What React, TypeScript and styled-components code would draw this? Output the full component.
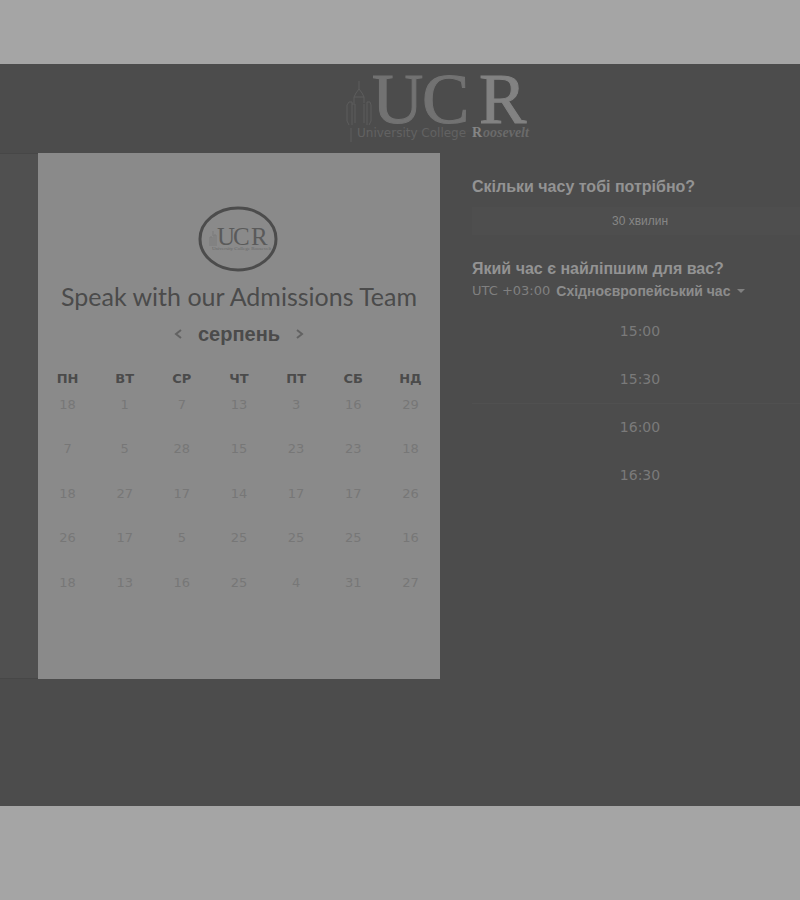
import React from 'react';
import styled, { createGlobalStyle } from 'styled-components';

const GlobalStyle = createGlobalStyle`
  *, *::before, *::after { box-sizing: border-box; }
  body { margin: 0; background: #a5a5a5; overflow-x: hidden; }
  button, select { font: inherit; color: inherit; border: 0; padding: 0; background: none; cursor: pointer; }
`;

const sans = `"Liberation Sans", Arial, sans-serif`;
const humanist = `Lato, "Open Sans", sans-serif`;
const wide = `"DejaVu Sans", Verdana, sans-serif`;

const Page = styled.div`
  min-height: 100vh;
  padding: 64px 0 94px;
  display: flex;
  background: #a5a5a5;
  font-family: ${sans};
`;

const Scheduler = styled.div`
  flex: 1;
  min-width: 0;
  background: #4c4c4c;
`;

const Header = styled.header`
  padding-left: 82px;
  display: flex;
  justify-content: center;
`;

const Columns = styled.main`
  display: grid;
  grid-template-columns: 38px minmax(0, 402fr) minmax(0, 360fr);
`;

const Gutter = styled.div`
  background: #505050;
  border-top: 1px solid #474747;
  border-bottom: 1px solid #474747;
`;

const Card = styled.section`
  min-height: 526px;
  padding: 53px 1px 24px;
  display: flex;
  flex-direction: column;
  align-items: center;
  background: #8a8a8a;
  color: #4b4b4b;
`;

const Title = styled.h1`
  margin: 8px 0 0;
  font: 400 25px/32px ${humanist};
  white-space: nowrap;
`;

const MonthBar = styled.div`
  margin-top: 6px;
  display: flex;
  align-items: center;
  gap: 12px;
`;

const Month = styled.h2`
  margin: 0;
  font: 700 20px/32px ${sans};
`;

const Arrow = styled.button`
  width: 16px;
  height: 24px;
  display: grid;
  place-items: center;
  color: #626262;
`;

const Calendar = styled.table`
  width: 100%;
  height: 246px;
  margin-top: 17px;
  border-collapse: collapse;
  table-layout: fixed;
  text-align: center;
`;

const Weekday = styled.th`
  height: 24px;
  padding: 0;
  font: 700 13px/24px ${wide};
`;

const DayCell = styled.td`
  padding: 0;
  vertical-align: top;
`;

const Day = styled.button`
  width: 40px;
  height: 28px;
  font: 400 13px/28px ${wide};
  color: #777777;
`;

const Side = styled.section`
  padding: 24px 0 0 32px;
  margin-right: -8px;
  color: #939393;
`;

const Question = styled.h2`
  margin: 0;
  font: 700 16px/20px ${sans};
`;

const Duration = styled.button`
  width: 100%;
  height: 28px;
  margin: 10px 0 24px;
  display: block;
  background: #4e4e4e;
  color: #868686;
  font: 400 12px/28px ${sans};
`;

const Zone = styled.div`
  height: 20px;
  margin-top: 2px;
  display: flex;
  align-items: center;
  gap: 6px;
  font: 400 13px/20px ${wide};
  color: #808080;
`;

const ZoneSelect = styled.select`
  appearance: none;
  font: 700 14px/20px ${sans};
  color: #8c8c8c;
`;

const Slots = styled.ul`
  margin: 7px 0 0;
  padding: 0;
  list-style: none;
`;

const SlotItem = styled.li`
  border-bottom: 1px solid ${(p: { $ruled?: boolean }) => (p.$ruled ? '#505050' : 'transparent')};
`;

const Slot = styled.button`
  width: 100%;
  height: 47px;
  display: block;
  font: 400 14px/47px ${wide};
  color: #7a7a7a;
`;

const LogoArt = styled.svg`
  display: block;
  flex: none;
  overflow: visible;
`;

function HeaderLogo() {
  return (
    <LogoArt width="190" height="89" viewBox="0 -8 190 89" role="img" aria-label="University College Roosevelt">
      <g fill="none" stroke="#5c5c5c" strokeWidth="1">
        <path d="M13 9v8M8 25l2-4 3-4 3 4 2 4M8 25h10M8 25v6M18 25v6M3 30l-2 3v16l2 4M3 30h3v23M6 32h3v19M18 32v19M21 53V30h3l1 3v16l-2 4M5 56v14" />
        <path d="M20 59h164" stroke="#515151" />
      </g>
      <g fontFamily="Liberation Serif" fontSize="71" strokeWidth="1">
        <text x="26" y="51" fill="#727272" stroke="#727272">U</text>
        <text x="76" y="51" fill="#727272" stroke="#727272">C</text>
        <text x="133" y="51" fill="#828282" stroke="#828282">R</text>
      </g>
      <text x="11" y="65" fill="#626262" fontFamily="DejaVu Sans" fontSize="12">University College</text>
      <text x="126" y="65" fill="#858585" fontFamily="Liberation Serif" fontWeight="700" fontSize="14">R</text>
      <text x="137" y="65" fill="#6a6a6a" fontFamily="Liberation Serif" fontStyle="italic" fontWeight="700" fontSize="14">oosevelt</text>
    </LogoArt>
  );
}

function BadgeLogo() {
  return (
    <LogoArt width="80" height="66" viewBox="0 0 80 66" role="img" aria-label="UCR">
      <ellipse cx="39" cy="33" rx="38" ry="31" fill="none" stroke="#4c4c4c" strokeWidth="3" />
      <path d="M14 25v5M11 40V31h2v9M15 40V29h2v11" fill="none" stroke="#7a7a7a" />
      <g fontFamily="Liberation Serif" fontSize="25" fill="#5a5a5a">
        <text x="18" y="39">U</text>
        <text x="34" y="39">C</text>
        <text x="52" y="39">R</text>
      </g>
      <text x="13" y="44" fill="#696969" fontFamily="Liberation Serif" fontSize="5">University College Roosevelt</text>
    </LogoArt>
  );
}

const weekdays = ['ПН', 'ВТ', 'СР', 'ЧТ', 'ПТ', 'СБ', 'НД'];
const weeks = [
  [18, 1, 7, 13, 3, 16, 29],
  [7, 5, 28, 15, 23, 23, 18],
  [18, 27, 17, 14, 17, 17, 26],
  [26, 17, 5, 25, 25, 25, 16],
  [18, 13, 16, 25, 4, 31, 27],
];
const slots = ['15:00', '15:30', '16:00', '16:30'];

export default function App() {
  return (
    <>
      <GlobalStyle />
      <Page>
        <Scheduler>
          <Header><HeaderLogo /></Header>
          <Columns>
            <Gutter />
            <Card>
              <BadgeLogo />
              <Title>Speak with our Admissions Team</Title>
              <MonthBar>
                <Arrow aria-label="Попередній місяць">
                  <svg width="8" height="10" viewBox="0 0 8 10" fill="none" stroke="currentColor" strokeWidth="2"><path d="M7 1 2 5l5 4" /></svg>
                </Arrow>
                <Month>серпень</Month>
                <Arrow aria-label="Наступний місяць">
                  <svg width="8" height="10" viewBox="0 0 8 10" fill="none" stroke="currentColor" strokeWidth="2"><path d="m1 1 5 4-5 4" /></svg>
                </Arrow>
              </MonthBar>
              <Calendar>
                <thead>
                  <tr>{weekdays.map((d) => <Weekday key={d} scope="col">{d}</Weekday>)}</tr>
                </thead>
                <tbody>
                  {weeks.map((week, i) => (
                    <tr key={i}>
                      {week.map((d, j) => <DayCell key={j}><Day>{d}</Day></DayCell>)}
                    </tr>
                  ))}
                </tbody>
              </Calendar>
            </Card>
            <Side>
              <Question>Скільки часу тобі потрібно?</Question>
              <Duration>30 хвилин</Duration>
              <Question>Який час є найліпшим для вас?</Question>
              <Zone>
                <label htmlFor="zone">UTC +03:00</label>
                <ZoneSelect id="zone"><option>Східноєвропейський час</option></ZoneSelect>
                <svg width="8" height="4" viewBox="0 0 8 4" fill="currentColor"><path d="M0 0h8L4 4z" /></svg>
              </Zone>
              <Slots>
                {slots.map((s) => <SlotItem key={s} $ruled={s === '15:30'}><Slot>{s}</Slot></SlotItem>)}
              </Slots>
            </Side>
          </Columns>
        </Scheduler>
      </Page>
    </>
  );
}
